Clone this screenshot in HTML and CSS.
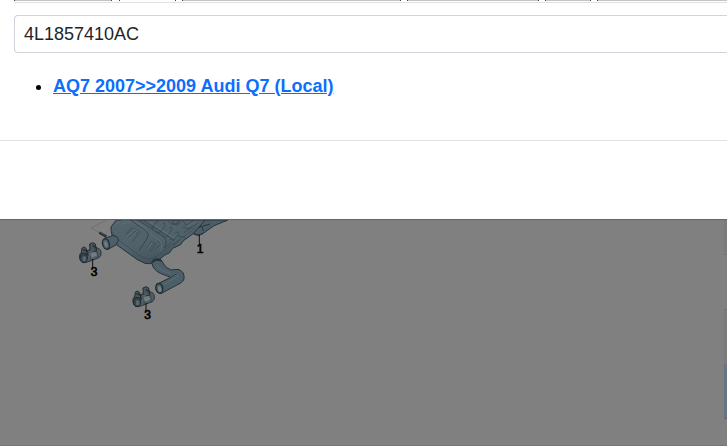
FILE: index.html
```html
<!DOCTYPE html>
<html lang="en">

<head>
  <meta charset="utf-8">
  <meta name="viewport" content="width=device-width, initial-scale=1.0">
  <title>Parts Search</title>
  <link rel="stylesheet" href="styles.css">
</head>

<body>
  <div class="modal">
    <div class="modal-body">
      <!--bottom edge of the column row-->
      <div class="columns">
        <div class="col col-code"></div>
        <div class="col col-qty"></div>
        <div class="col col-name"></div>
        <div class="col col-model"></div>
        <div class="col col-year"></div>
        <div class="col col-rest"></div>
      </div>
      <input type="text" class="part-input" id="partNumber" aria-label="Part number" value="4L1857410AC">
      <ul class="results">
        <li><a href="#aq7">AQ7 2007&gt;&gt;2009 Audi Q7 (Local)</a></li>
      </ul>
    </div>
    <div class="modal-footer"></div>
  </div>

  <div class="page">
    <svg class="diagram" viewBox="0 27 510 333" role="img" aria-label="Exhaust silencer diagram">
      <defs>
        <linearGradient id="steel" x1="0" y1="0" x2="0.4" y2="1">
          <stop offset="0" stop-color="#53646c"/>
          <stop offset="0.6" stop-color="#506169"/>
          <stop offset="1" stop-color="#43545d"/>
        </linearGradient>
        <g id="clamp">
          <path d="M4 32 L46 17 Q62 15 65 28 Q67 40 59 46 L22 60 Q5 64 1 48 Q-1 37 4 32Z" fill="#525e65" stroke="#2b353a" stroke-width="3"/>
          <path d="M6 33 L8 17 L15 14 L21 19 L24 34 L16 37 M32 25 L31 5 L40 1 L48 5 L52 26 L42 28" fill="#4a565d" stroke="#222b30" stroke-width="3"/>
          <path d="M12 22 L27 28 M40 10 L52 17 M23 32 L27 40" fill="none" stroke="#222b30" stroke-width="4"/>
          <path d="M28 36 L48 28 L54 39 L36 47Z" fill="#727d82"/>
          <ellipse cx="13" cy="47" rx="11" ry="14" fill="#35424a" stroke="#1f282d" stroke-width="3"/>
          <ellipse cx="15" cy="49" rx="6" ry="8" fill="#5a666d"/>
          <path d="M27 30 Q37 38 34 55 M45 18 Q57 27 55 46" fill="none" stroke="#2d383e" stroke-width="2"/>
        </g>
      </defs>

      <!--leader line and pin-->
      <path d="M111 27 L64 51 L86 64" fill="none" stroke="#646869" stroke-width="2"/>
      <path d="M88 65 L109 76" stroke="#1e282d" stroke-width="8"/>
      <path d="M91 65 L107 73" stroke="#65727a" stroke-width="2"/>

      <!--right outlet-->
      <path d="M350 27 L474 27 L432 44 L397 69 Q382 77 370 69 L335 54Z" fill="#4b5d66" stroke="#27343b" stroke-width="3"/>
      <path d="M374 67 Q386 78 399 66 M365 55 L420 39 M400 60 L395 45" fill="none" stroke="#27343b" stroke-width="3"/>

      <!--silencer body-->
      <path d="M139 27 L405 27 L384 52 L367 70 L339 90 L332 101 L308 112 L299 125 L283 133 L270 144 Q251 162 225 157 L202 146 L141 102 Q122 76 123 48Z" fill="url(#steel)" stroke="#26333a" stroke-width="3"/>
      <path d="M126 61 Q131 78 151 91 L205 131 Q226 147 249 142 L272 128 L306 101 L337 80 L379 49" fill="none" stroke="#3a4b54" stroke-width="2"/>
      <path d="M130 47 Q144 27 179 27 M157 39 Q182 28 201 37 L270 90 Q280 102 271 120" fill="none" stroke="#64757d" stroke-width="2"/>
      <path d="M183 28 L224 56 Q240 66 231 83 L207 119 M205 27 L279 76 Q296 89 283 111 M218 27 L312 87" fill="none" stroke="#35464f" stroke-width="3"/>

      <!--pressed panels on the left side-->
      <g fill="none" stroke="#384953" stroke-width="2">
        <path d="M166 74 L190 51 L210 63 L188 92 M174 80 L194 60 L203 65 L182 86 M169 66 L187 48"/>
        <path d="M227 114 L244 91 L258 98 L240 123 M234 118 L249 98 M257 114 L272 98 L261 89"/>
      </g>
      <g fill="none" stroke="#6b7c83" stroke-width="2">
        <path d="M170 78 L192 56 L206 64 M179 86 L199 66 M231 117 L247 95"/>
      </g>

      <!--pressed ribs-->
      <g fill="none" stroke="#33444d" stroke-width="2">
        <path d="M244 50 L264 29 M249 58 Q244 50 253 41 L266 28 M257 63 L280 37 Q286 33 285 44 L270 65Z"/>
        <path d="M278 75 L300 49 Q307 46 305 57 L289 79Z M300 85 L319 64 Q327 60 325 71 L311 89Z"/>
        <path d="M294 31 L305 39 L322 42 L332 34 L329 27"/>
        <ellipse cx="316" cy="33" rx="9" ry="6" stroke-width="3"/>
        <path d="M338 27 L348 43 L371 30 M336 48 L356 53 L386 36 M342 65 L367 48"/>
        <path d="M283 112 L303 94 M308 105 L329 87 M325 75 L346 79"/>
      </g>
      <g fill="none" stroke="#66777f" stroke-width="2">
        <path d="M261 60 L279 40 M281 72 L299 53 M303 83 L319 67 M350 47 L374 32"/>
        <path d="M236 31 L311 81 M190 27 L230 53"/>
      </g>

      <!--left inlet-->
      <path d="M103 82 L128 74 Q145 74 145 89 L138 102 L112 116Z" fill="#4d5f68" stroke="#27343b" stroke-width="3"/>
      <ellipse cx="108" cy="99" rx="10" ry="16" transform="rotate(-16 108 99)" fill="#52616a" stroke="#222e35" stroke-width="4"/>
      <ellipse cx="108" cy="100" rx="5" ry="9" transform="rotate(-16 108 100)" fill="#707b80"/>

      <!--tail pipe-->
      <path d="M246 157 Q245 145 260 143 Q274 143 279 156 Q286 171 303 177 L324 175 Q345 181 342 204 Q340 211 332 216 L274 247 Q257 248 258 229 Q259 219 268 216 L302 199 L271 187 Q249 176 246 157Z" fill="#4c5f68" stroke="#24313a" stroke-width="3"/>
      <path d="M247 154 Q257 141 275 150" fill="none" stroke="#222f36" stroke-width="5"/>
      <path d="M302 199 L319 189" fill="none" stroke="#33444d" stroke-width="3"/>
      <path d="M260 163 Q269 179 302 187 M282 220 L328 193" fill="none" stroke="#5b6d75" stroke-width="3"/>
      <ellipse cx="268" cy="232" rx="10" ry="15" transform="rotate(-14 268 232)" fill="#4e5d65" stroke="#1f2b31" stroke-width="4"/>
      <ellipse cx="269" cy="234" rx="5" ry="9" transform="rotate(-14 269 234)" fill="#758085"/>

      <use href="#clamp" x="28" y="94"/>
      <use href="#clamp" x="188" y="226"/>

      <path d="M68 144 V171 M228 275 V300 M388 71 V101" stroke="#111" stroke-width="3"/>
      <g class="callouts">
        <text x="72" y="195">3</text>
        <text x="233" y="324">3</text>
        <text x="390" y="126">1</text>
      </g>
    </svg>

    <div class="side">
      <div class="side-row side-first"></div>
      <div class="side-gap"></div>
      <div class="side-row"></div>
      <div class="side-row side-active"></div>
    </div>
  </div>
</body>

</html>
```
FILE: styles.css
```css
* {
  box-sizing: border-box;
}

body {
  font-family: "Liberation Sans", Arial, sans-serif;
  font-size: 18px;
  background-color: #808080;
  margin: 0;
  min-height: 100vh;
  display: flex;
  flex-direction: column;
  overflow: hidden;
}

.modal {
  background-color: #fff;
}

.modal-body {
  padding-left: 14px;
  padding-bottom: 41px;
  border-bottom: 1px solid #dee2e6;
}

.modal-footer {
  height: 78px;
}

.columns {
  display: flex;
  gap: 6px;
  padding-bottom: 1px;
  border-bottom: 1px solid #dee2e6;
  margin-bottom: 12px;
}

.col {
  height: 1px;
  background-color: #c4c4c4;
  border-left: 1px solid #444;
  border-right: 1px solid #444;
}

.col-code {
  width: 98px;
}

.col-qty {
  width: 57px;
  margin-left: 1px;
  background-color: #fff;
}

.col-name {
  width: 219px;
}

.col-model {
  width: 132px;
}

.col-year {
  width: 46px;
}

.col-rest {
  flex: 1;
  border-right: none;
}

.part-input {
  display: block;
  width: 100%;
  height: 38px;
  padding: 0 9px;
  border: 1px solid #ced4da;
  border-right: none;
  border-radius: 4px 0 0 4px;
  background-color: #fff;
  color: #212529;
  font-family: inherit;
  font-size: 18px;
}

.results {
  margin: 20px 0 0;
  padding-left: 39px;
  line-height: 26px;
}

.results a {
  color: #0d6efd;
  font-weight: bold;
}

.page {
  flex: 1;
  display: flex;
  justify-content: space-between;
  align-items: flex-start;
  border-top: 1px solid #666;
  border-bottom: 1px solid #777;
}

.diagram {
  width: 170px;
  margin-left: 70px;
}

.callouts {
  font-family: "Liberation Sans", Arial, sans-serif;
  font-size: 36px;
  fill: #000;
  stroke: #000;
  stroke-width: 2px;
  text-anchor: middle;
}

.side {
  width: 3px;
}

.side-row {
  height: 55px;
  background-color: #7b7b7b;
  border-top: 1px solid #727272;
}

.side-first {
  height: 35px;
  border-top: none;
  border-bottom: 1px solid #727272;
}

.side-gap {
  height: 54px;
}

.side-active {
  background-color: #6a7387;
  border-top: none;
  border-bottom: 1px solid #5d6576;
}
```
